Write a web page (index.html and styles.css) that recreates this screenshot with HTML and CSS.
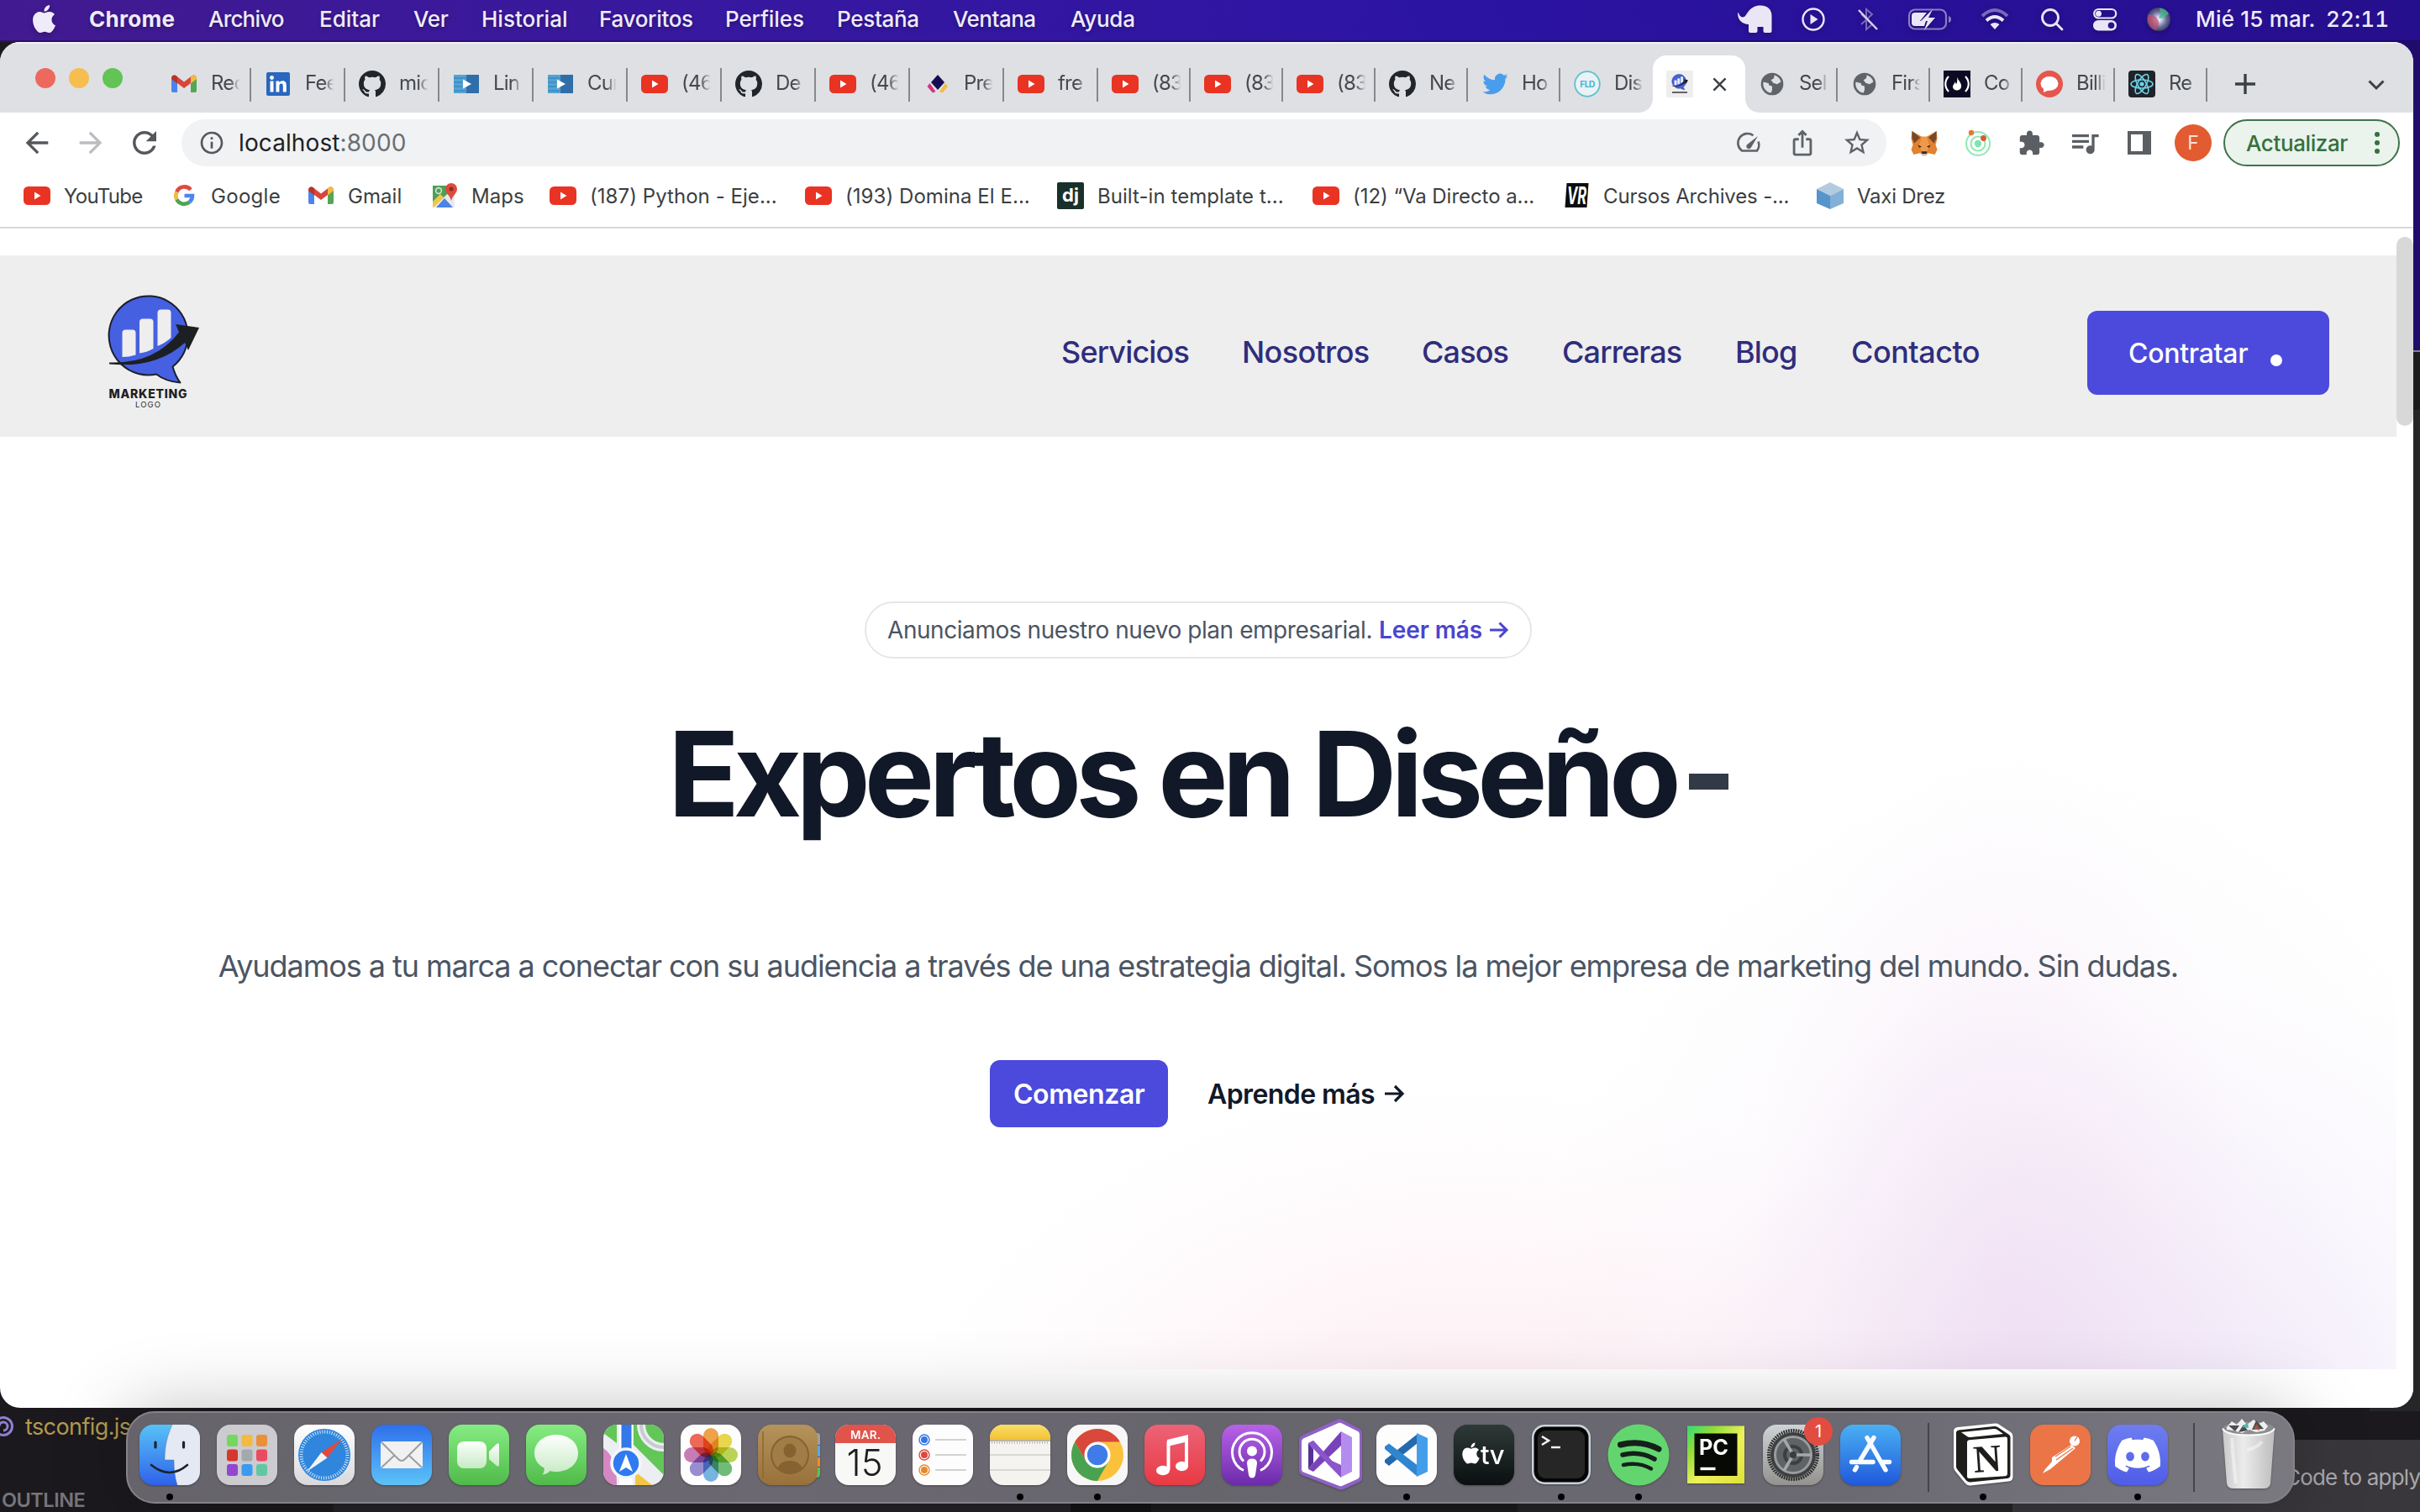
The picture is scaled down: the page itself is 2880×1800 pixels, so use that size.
FILE: index.html
```html
<!DOCTYPE html>
<html lang="es">
<head>
<meta charset="utf-8">
<title>Marketing</title>
<link rel="stylesheet" href="styles.css">
</head>
<body>
<svg class="defs" aria-hidden="true">
  <defs>
    <linearGradient id="gBlue" x2="0" y2="1"><stop stop-color="#2f6fec"/><stop offset="1" stop-color="#5cc3f8"/></linearGradient>
    <linearGradient id="gFinder" x2="0" y2="1"><stop stop-color="#58c2f7"/><stop offset="1" stop-color="#2f62ea"/></linearGradient>
    <linearGradient id="gGreen" x2="0" y2="1"><stop stop-color="#86ec82"/><stop offset="1" stop-color="#4fbb4a"/></linearGradient>
    <linearGradient id="gSilver" x2="0" y2="1"><stop stop-color="#fff"/><stop offset="1" stop-color="#d9d9dc"/></linearGradient>
    <linearGradient id="gSoft" x2="0" y2="1"><stop stop-color="#fdfffd"/><stop offset="1" stop-color="#c7eac4"/></linearGradient>
    <linearGradient id="gStore" x2="0" y2="1"><stop stop-color="#4ab0f3"/><stop offset="1" stop-color="#2059dc"/></linearGradient>
    <linearGradient id="gMusic" x2="0" y2="1"><stop stop-color="#ec6377"/><stop offset="1" stop-color="#e83a43"/></linearGradient>
    <linearGradient id="gPod" x2="0" y2="1"><stop stop-color="#b862e8"/><stop offset="1" stop-color="#6c2bab"/></linearGradient>
    <linearGradient id="gTv" x2="0" y2="1"><stop stop-color="#2e3a38"/><stop offset="1" stop-color="#0a0f10"/></linearGradient>
    <linearGradient id="gGear" x2="0" y2="1"><stop stop-color="#cdd3d6"/><stop offset="1" stop-color="#94928f"/></linearGradient>
    <linearGradient id="gDisc" x2="0" y2="1"><stop stop-color="#6f7df0"/><stop offset="1" stop-color="#4f5de8"/></linearGradient>
    <linearGradient id="gBrown" x2="0" y2="1"><stop stop-color="#b5935a"/><stop offset="1" stop-color="#98703b"/></linearGradient>
    <linearGradient id="gNote" x2="0" y2="1"><stop stop-color="#fade68"/><stop offset="1" stop-color="#f2c135"/></linearGradient>
    <linearGradient id="gPc" x2="1" y2="1"><stop stop-color="#2fdc78"/><stop offset=".25" stop-color="#8fdc3a"/><stop offset=".55" stop-color="#eef05a"/><stop offset="1" stop-color="#dfe23a"/></linearGradient>
    <linearGradient id="gTrash" x2="1" y2="0"><stop stop-color="#c9c9c9"/><stop offset=".4" stop-color="#ececec"/><stop offset="1" stop-color="#bdbdbd"/></linearGradient>
    <radialGradient id="gSiri"><stop stop-color="#fff"/><stop offset=".3" stop-color="#b9c3dc"/><stop offset=".65" stop-color="#6a6f9c"/><stop offset="1" stop-color="#3d3f66"/></radialGradient>
    <clipPath id="app"><rect width="72" height="72" rx="16"/></clipPath>
  </defs>
  <symbol id="yt" viewBox="0 0 32 32"><rect y="5" width="32" height="22" rx="5.500" fill="#e93323"/><path d="M13 11.500v9l7.500-4.500z" fill="#fff"/></symbol>
  <symbol id="gmail" viewBox="0 0 32 32"><path d="M1 9v15a2 2 0 0 0 2 2h5V12z" fill="#4c84ec"/><path d="M31 9v15a2 2 0 0 1-2 2h-5V12z" fill="#54a655"/><path d="M1 9.500C1 6 4.500 4.500 7 6.500l9 7 9-7c2.500-2 6-.5 6 3l-7 5.500-8 6-8-6z" fill="#d8453a"/><path d="M24 7.300l1-.8c2.500-2 6-.5 6 3V10l-7 5.500z" fill="#f3bb42"/><path d="M1 9.500V10l7 5.500V7.300l-1-.8c-2.500-2-6-.5-6 3z" fill="#b93329"/></symbol>
  <symbol id="gh" viewBox="0 0 16 16"><path fill="#22262a" d="M8 0C3.580 0 0 3.580 0 8c0 3.540 2.290 6.530 5.470 7.590.4.070.55-.17.55-.38 0-.19-.01-.82-.01-1.490-2.010.37-2.530-.49-2.690-.94-.09-.23-.48-.94-.82-1.130-.28-.15-.68-.52-.01-.53.63-.01 1.080.58 1.230.82.72 1.210 1.870.87 2.330.66.070-.52.28-.87.51-1.070-1.780-.2-3.640-.89-3.640-3.950 0-.87.31-1.590.82-2.150-.08-.2-.36-1.020.08-2.120 0 0 .67-.21 2.200.82.64-.18 1.320-.27 2-.27s1.360.09 2 .27c1.530-1.040 2.200-.82 2.200-.82.44 1.100.16 1.920.08 2.120.51.56.82 1.270.82 2.150 0 3.070-1.870 3.750-3.650 3.950.29.25.54.73.54 1.480 0 1.070-.01 1.930-.01 2.200 0 .21.15.46.55.38A8.010 8.010 0 0 0 16 8c0-4.420-3.580-8-8-8z"/></symbol>
  <symbol id="li" viewBox="0 0 32 32"><rect x="2" y="2" width="28" height="28" rx="2" fill="#2866c0"/><g fill="#fff"><rect x="6.500" y="12.500" width="4" height="13"/><circle cx="8.500" cy="8.500" r="2.400"/><path d="M13.500 12.500h3.800v1.800c.8-1.300 2.200-2.100 4-2.100 3.700 0 4.500 2.400 4.500 5.800v7.500h-4V19c0-1.700-.1-3.400-2.100-3.400s-2.300 1.600-2.300 3.300v6.600h-3.900z"/></g></symbol>
  <symbol id="play" viewBox="0 0 32 32"><rect x="1" y="5" width="30" height="22" fill="#2f6ea8"/><path d="M1 5h15v22H1z" fill="#55a3d3"/><path d="M1 9h14M1 14h10M1 19h10M1 24h14" stroke="#3d8abf" stroke-width="1.500"/><path d="M12 10.500v11l10-5.500z" fill="#fff"/></symbol>
  <symbol id="pre" viewBox="0 0 32 32"><path d="M17 5l8 9-8 9-8-9z" fill="#160c52"/><path d="M7.500 15l7 10-3.500 1.500-6.500-7.500z" fill="#d4337e"/><path d="M26 15l-7 10 3.500 1.500 6.500-7.500z" fill="#f3bd3c"/></symbol>
  <symbol id="tw" viewBox="0 0 24 24"><path fill="#4a9ded" d="M23.643 4.937c-.835.37-1.732.62-2.675.733a4.670 4.670 0 0 0 2.048-2.578 9.300 9.300 0 0 1-2.958 1.130 4.660 4.660 0 0 0-7.938 4.250 13.229 13.229 0 0 1-9.602-4.868c-.4.69-.63 1.490-.63 2.342A4.660 4.660 0 0 0 3.960 9.824a4.647 4.647 0 0 1-2.110-.583v.06a4.660 4.660 0 0 0 3.737 4.568 4.692 4.692 0 0 1-2.104.08 4.661 4.661 0 0 0 4.352 3.234 9.348 9.348 0 0 1-5.786 1.995 9.500 9.500 0 0 1-1.112-.065 13.175 13.175 0 0 0 7.140 2.093c8.570 0 13.255-7.098 13.255-13.254 0-.2-.005-.402-.014-.602a9.470 9.470 0 0 0 2.323-2.410z"/></symbol>
  <symbol id="fld" viewBox="0 0 32 32"><circle cx="16" cy="16" r="14.800" fill="#e9f2f4" stroke="#5cc0cf" stroke-width="1.800"/><text x="16" y="20" font-size="10.500" font-weight="700" text-anchor="middle" fill="#4db3d2" font-family="Inter, sans-serif">FLD</text></symbol>
  <symbol id="globe" viewBox="0 0 24 24"><circle cx="12" cy="12" r="10" fill="#606469"/><path fill="#dee0e4" d="M11 19.930c-3.950-.49-7-3.850-7-7.930 0-.62.08-1.210.21-1.790L9 11.500v1.500l3 1v3.500zM14 4.200c2.900.8 5.200 3 5.800 6l-3.300 2-3.500-1.200-2-2.500 2.500-1.500z"/></symbol>
  <symbol id="fcc" viewBox="0 0 32 32"><rect width="32" height="32" fill="#0b0a22"/><path d="M6 7c-5 5.500-5 12.500 0 18M26 7c5 5.500 5 12.500 0 18" fill="none" stroke="#fff" stroke-width="2.200"/><path d="M16 7.500c1 4 6 7.500 5 12-.4 2.500-2.500 4-5 4s-5-1.500-5-4.500c0-2 2-3 2.500-5.500 1 1 1.300 2 1.300 3 1.700-2 1.700-5 1.200-9z" fill="#fff"/></symbol>
  <symbol id="bill" viewBox="0 0 32 32"><circle cx="16" cy="16" r="16" fill="#e6564c"/><ellipse cx="16" cy="15.500" rx="10.500" ry="8.500" fill="#fff"/><path d="M9 19v7l7-3z" fill="#fff"/></symbol>
  <symbol id="react" viewBox="0 0 32 32"><rect width="32" height="32" rx="4" fill="#202327"/><g fill="none" stroke="#6fd3ea" stroke-width="1.600"><ellipse cx="16" cy="16" rx="13" ry="5"/><ellipse cx="16" cy="16" rx="13" ry="5" transform="rotate(60 16 16)"/><ellipse cx="16" cy="16" rx="13" ry="5" transform="rotate(120 16 16)"/></g><circle cx="16" cy="16" r="2.600" fill="#6fd3ea"/></symbol>
  <symbol id="logo" viewBox="128 350 112 112"><path d="M205.500 436.500A47 47 0 1 0 186 445.500q12 9 28.500 10-6-8-9-19z" fill="#4660e2" stroke="#1b1f2c" stroke-width="2" stroke-linejoin="round"/><g fill="#eee"><path d="M145.500 425v-28.500q0-4 4-4h8q4 0 4 4v26q-8 2.500-16 2.500z"/><path d="M166 420.500v-37q0-4 4-4h8.500q4 0 4 4V415q-8 4.500-16.500 5.500z"/><path d="M187.500 412v-39.500q0-4 4-4h8q4 0 4 4V402q-7 6.500-16 10z"/></g><path d="M130 431.500q54 2 83-36l-4-9.500 28 4-13 27-4-9q-34 31-90 25.500z" fill="#1d2022"/></symbol>
  <symbol id="apple" viewBox="0 0 24 24"><path d="M12.152 6.896c-.948 0-2.415-1.078-3.960-1.040-2.040.027-3.910 1.183-4.961 3.014-2.117 3.675-.546 9.103 1.519 12.090 1.013 1.454 2.208 3.090 3.792 3.039 1.520-.065 2.090-.987 3.935-.987 1.831 0 2.350.987 3.960.948 1.637-.026 2.676-1.480 3.676-2.948 1.156-1.688 1.636-3.325 1.662-3.415-.039-.013-3.182-1.221-3.220-4.857-.026-3.040 2.480-4.494 2.597-4.559-1.429-2.090-3.623-2.324-4.390-2.376-2-.156-3.675 1.090-4.610 1.090zM15.530 3.830c.843-1.012 1.400-2.427 1.245-3.830-1.207.052-2.662.805-3.532 1.818-.78.896-1.454 2.338-1.273 3.714 1.338.104 2.715-.688 3.559-1.701"/></symbol>
</svg>

<header class="menubar">
  <svg class="apple"><use href="#apple"/></svg>
  <nav class="menus">
    <b class="m1">Chrome</b><span class="m2">Archivo</span><span class="m3">Editar</span><span class="m4">Ver</span><span class="m5">Historial</span><span class="m6">Favoritos</span><span class="m7">Perfiles</span><span class="m8">Pestaña</span><span class="m9">Ventana</span><span>Ayuda</span>
  </nav>
  <div class="status">
    <span class="s1"><svg width="44" height="36" viewBox="0 0 44 36"><path fill="#ebe6f6" d="M3 10c1 5 5 7 8 4 1.500-1.500 1.500-3 3.500-5C18 4 23 1.500 29 1.500c9 0 13.500 5 13.500 12.500v18q0 2-2 2h-6q-2 0-2-2v-5h-7v5q0 2-2 2H17q-2 0-2-2v-8C8 24 2 19 2 11z"/></svg></span>
    <span class="s2"><svg width="32" height="32" viewBox="0 0 32 32"><circle cx="16" cy="16" r="12.500" fill="none" stroke="#ebe6f6" stroke-width="2.400"/><path d="M12.500 10v12l9-6z" fill="#ebe6f6"/></svg></span>
    <span class="s3"><svg width="32" height="32" viewBox="0 0 32 32" fill="none" stroke-width="2"><path d="M9 10l13 12-7 6V4l7 6L9 22" stroke="#7a68bb"/><path d="M6 5l22 23" stroke="#d9d2ee" stroke-width="2.400"/></svg></span>
    <span class="s4"><svg width="56" height="32" viewBox="0 0 56 32"><rect x="3" y="4.500" width="44" height="23" rx="7" fill="none" stroke="#8c7dc5" stroke-width="2.200"/><path d="M50 12v8q3-1 3-4t-3-4z" fill="#8c7dc5"/><path d="M10 8h14l-8 10h7l-2 6H10q-4 0-4-4v-8q0-4 4-4z" fill="#ebe6f6"/><path d="M31 4L17 18h8l-4 11 13-15h-8z" fill="#ebe6f6"/></svg></span>
    <span class="s5"><svg width="36" height="32" viewBox="0 0 36 32" fill="none" stroke-width="4"><path d="M3 12q15-14 30 0" stroke="#7a68bb"/><path d="M8 17.500q10-9 20 0" stroke="#ebe6f6"/><path d="M18 28l-5.500-6q5.500-4 11 0z" fill="#ebe6f6"/></svg></span>
    <span class="s6"><svg width="32" height="32" viewBox="0 0 32 32" fill="none" stroke="#ebe6f6" stroke-width="2.800" stroke-linecap="round"><circle cx="13" cy="14" r="9.500"/><path d="M20 21l7 7"/></svg></span>
    <span class="s7"><svg width="32" height="32" viewBox="0 0 32 32"><rect x="3.200" y="4" width="26" height="10.500" rx="5.200" fill="none" stroke="#ebe6f6" stroke-width="2.200"/><circle cx="8.500" cy="9.300" r="3.500" fill="#ebe6f6"/><rect x="2" y="17" width="28" height="12.500" rx="6.200" fill="#ebe6f6"/><circle cx="23.500" cy="23.200" r="3.800" fill="#281290"/></svg></span>
    <span class="s8"><svg width="30" height="30" viewBox="0 0 30 30"><circle cx="15" cy="15" r="14" fill="url(#gSiri)"/><path d="M3 9A14 14 0 0 0 12 28q5-8 2-13T3 9z" fill="#c94a6e" opacity=".7"/><path d="M16 1.500a14 14 0 0 1 11 7q-6 5-12 6 3-6 1-13z" fill="#45b98c" opacity=".75"/></svg></span>
    <span class="s9">Mié 15 mar.</span>
    <span class="s10">22:11</span>
  </div>
</header>

<div class="desk">
  <div class="desk-right"></div>
  <div class="desk-file"><svg width="36" height="36" viewBox="0 0 36 36"><circle cx="17" cy="18" r="10.500" fill="none" stroke="#8f7fd0" stroke-width="3"/><path d="M12 18a5 5 0 1 1 5 5" fill="none" stroke="#8f7fd0" stroke-width="3"/></svg><span>tsconfig.js</span></div>
  <div class="desk-outline">OUTLINE</div>
  <div class="desk-panels"><i class="p1"></i><i class="p2"></i><i class="p3"></i><i class="p4"></i><i class="p5"></i></div>
  <div class="desk-toast">Code to apply</div>
</div>

<section class="window">
  <div class="tabs">
    <div class="lights"><i class="red"></i><i class="yellow"></i><i class="green"></i></div>
    <div class="tab"><svg><use href="#gmail"/></svg><span>Rec</span></div>
    <div class="tab"><svg><use href="#li"/></svg><span>Fee</span></div>
    <div class="tab"><svg><use href="#gh"/></svg><span>mic</span></div>
    <div class="tab"><svg><use href="#play"/></svg><span>Lin</span></div>
    <div class="tab"><svg><use href="#play"/></svg><span>Cur</span></div>
    <div class="tab"><svg><use href="#yt"/></svg><span>(46</span></div>
    <div class="tab"><svg><use href="#gh"/></svg><span>De</span></div>
    <div class="tab"><svg><use href="#yt"/></svg><span>(46</span></div>
    <div class="tab"><svg><use href="#pre"/></svg><span>Pre</span></div>
    <div class="tab"><svg><use href="#yt"/></svg><span>fre</span></div>
    <div class="tab narrow"><svg><use href="#yt"/></svg><span>(83</span></div>
    <div class="tab narrow"><svg><use href="#yt"/></svg><span>(83</span></div>
    <div class="tab narrow"><svg><use href="#yt"/></svg><span>(83</span></div>
    <div class="tab narrow"><svg><use href="#gh"/></svg><span>Ne</span></div>
    <div class="tab narrow"><svg><use href="#tw"/></svg><span>Ho</span></div>
    <div class="tab narrow bare"><svg><use href="#fld"/></svg><span>Dis</span></div>
    <div class="tab active"><svg viewBox="0 0 32 32"><rect width="32" height="32" fill="#eee"/><use href="#logo" x="6" y="4" width="21" height="20"/><path d="M7 26h18" stroke="#33363c" stroke-width="1.600"/></svg><svg class="close" viewBox="0 0 18 18"><path d="M1.500 1.500l15 15M16.500 1.500l-15 15" stroke="#3c4043" stroke-width="2.600"/></svg></div>
    <div class="tab narrow"><svg><use href="#globe"/></svg><span>Sel</span></div>
    <div class="tab narrow"><svg><use href="#globe"/></svg><span>Firs</span></div>
    <div class="tab narrow"><svg><use href="#fcc"/></svg><span>Co</span></div>
    <div class="tab narrow"><svg><use href="#bill"/></svg><span>Billi</span></div>
    <div class="tab narrow"><svg><use href="#react"/></svg><span>Re</span></div>
    <svg class="plus" viewBox="0 0 24 24"><path d="M12 0v24M0 12h24" stroke="#3c4043" stroke-width="3.400"/></svg>
    <svg class="chev" viewBox="0 0 20 12"><path d="M1.500 1.500L10 10l8.500-8.500" fill="none" stroke="#3c4043" stroke-width="3"/></svg>
  </div>

  <div class="toolbar">
    <svg class="back" viewBox="0 0 24 24"><path fill="#54585d" d="M20 11H7.830l5.590-5.590L12 4l-8 8 8 8 1.410-1.410L7.830 13H20v-2z"/></svg>
    <svg class="fwd" viewBox="0 0 24 24"><path fill="#bbbdc0" d="M4 13h12.170l-5.590 5.590L12 20l8-8-8-8-1.410 1.410L16.170 11H4v2z"/></svg>
    <svg class="reload" viewBox="0 0 24 24"><path fill="#54585d" d="M17.650 6.350C16.200 4.900 14.210 4 12 4c-4.420 0-7.990 3.580-7.990 8s3.570 8 7.990 8c3.730 0 6.840-2.550 7.730-6h-2.080c-.82 2.330-3.040 4-5.650 4-3.310 0-6-2.690-6-6s2.690-6 6-6c1.660 0 3.140.69 4.220 1.780L13 11h7V4l-2.350 2.350z"/></svg>
    <div class="omni">
      <svg class="info" viewBox="0 0 24 24"><path fill="#54585d" d="M11 7h2v2h-2zm0 4h2v6h-2zm1-9C6.480 2 2 6.480 2 12s4.480 10 10 10 10-4.480 10-10S17.520 2 12 2zm0 18c-4.410 0-8-3.590-8-8s3.590-8 8-8 8 3.590 8 8-3.590 8-8 8z"/></svg>
      <span class="url">localhost<em>:8000</em></span>
      <svg class="gauge" viewBox="0 0 28 24"><path d="M18.500 3.200A11.300 11.300 0 0 0 5 21.500h18a11.500 11.500 0 0 0 1.500-11" fill="none" stroke="#5f6368" stroke-width="2.600"/><path d="M24 4L12 13.500a3 3 0 1 0 4 4z" fill="#5f6368"/></svg>
      <svg class="share" viewBox="0 0 24 24"><path fill="#5f6368" d="M16 5l-1.420 1.420-1.590-1.590V16h-1.980V4.830L9.420 6.420 8 5l4-4 4 4zm4 5v11c0 1.100-.9 2-2 2H6c-1.110 0-2-.9-2-2V10c0-1.110.89-2 2-2h3v2H6v11h12V10h-3V8h3c1.100 0 2 .89 2 2z"/></svg>
      <svg class="star" viewBox="0 0 24 24"><path fill="#5f6368" d="M22 9.240l-7.190-.62L12 2 9.190 8.630 2 9.240l5.460 4.730L5.820 21 12 17.270 18.180 21l-1.630-7.030L22 9.240zM12 15.400l-3.760 2.270 1-4.280-3.320-2.880 4.380-.38L12 6.100l1.710 4.040 4.380.38-3.320 2.880 1 4.280L12 15.400z"/></svg>
    </div>
    <svg class="fox" viewBox="0 0 34 32"><path d="M2 1l12 7h6L32 1l1 9-2 8 2 6-3 6-8-2-3 3h-4l-3-3-8 2-3-6 2-6-2-8z" fill="#e2812f"/><path d="M2 1l10 8-7 7-3-6zM32 1L22 9l7 7 3-6z" fill="#75492a"/><path d="M14 8h6l3 10-3 10h-6l-3-10z" fill="#ee9a4a"/><path d="M9 18l5 2-3 1.500zM25 18l-5 2 3 1.500z" fill="#33261e"/><path d="M13.500 26h7l-1.500 5h-4z" fill="#2b2b33"/><path d="M13 29l2 2.500h4l2-2.500z" fill="#c9bcb3"/></svg>
    <svg class="orbit" viewBox="0 0 32 32"><g fill="none" stroke="#8ee8b2" stroke-width="2"><circle cx="16" cy="17" r="14"/><circle cx="16" cy="17" r="8.500"/></g><circle cx="16" cy="17" r="4.200" fill="#7ee6aa"/><circle cx="8" cy="4" r="3.200" fill="#e17a38"/><circle cx="22.500" cy="10.500" r="3.400" fill="#d95736"/></svg>
    <svg class="puzzle" viewBox="0 0 24 24"><path fill="#5b5f64" d="M20.500 11H19V7c0-1.100-.9-2-2-2h-4V3.500C13 2.120 11.880 1 10.500 1S8 2.120 8 3.500V5H4c-1.100 0-1.990.9-1.990 2v3.800H3.500c1.490 0 2.700 1.210 2.700 2.700s-1.210 2.700-2.700 2.700H2V20c0 1.100.9 2 2 2h3.800v-1.500c0-1.490 1.210-2.700 2.700-2.700 1.490 0 2.700 1.210 2.700 2.700V22H17c1.100 0 2-.9 2-2v-4h1.500c1.380 0 2.500-1.120 2.500-2.500S21.880 11 20.500 11z"/></svg>
    <svg class="queue" viewBox="0 0 24 24"><path fill="#5b5f64" d="M15 6H3v2h12V6zm0 4H3v2h12v-2zM3 16h8v-2H3v2zM17 6v8.180c-.31-.11-.65-.18-1-.18-1.660 0-3 1.340-3 3s1.340 3 3 3 3-1.340 3-3V8h3V6h-5z"/></svg>
    <svg class="side" viewBox="0 0 28 28"><path d="M0 0h28v28H0zM4 4v20h14V4z" fill="#5b5f64" fill-rule="evenodd"/></svg>
    <span class="avatar">F</span>
    <button class="update">Actualizar<svg viewBox="0 0 6 26"><circle cx="3" cy="3" r="3"/><circle cx="3" cy="13" r="3"/><circle cx="3" cy="23" r="3"/></svg></button>
  </div>

  <div class="bookmarks">
    <a class="b1"><svg><use href="#yt"/></svg>YouTube</a>
    <a class="b2"><svg viewBox="0 0 32 32"><g fill="none" stroke-width="4.600"><path d="M24 8.800A10 10 0 0 0 7.300 11.500" stroke="#dd4b3e"/><path d="M7.300 11.500a10 10 0 0 0 0 9" stroke="#f0bb40"/><path d="M7.300 20.500A10 10 0 0 0 22.600 23.500" stroke="#51a351"/><path d="M22.600 23.500A10 10 0 0 0 26 16h-9.500" stroke="#4d85ec"/></g></svg>Google</a>
    <a class="b3"><svg><use href="#gmail"/></svg>Gmail</a>
    <a class="b4"><svg viewBox="0 0 32 32"><path d="M2 4h26v26H2z" fill="#4e9f57"/><path d="M2 30L28 6v24z" fill="#e8eaee"/><path d="M2 23l9-9 4 4L3 30H2z" fill="#f2c643"/><path d="M6 30l10-11 10 11z" fill="#4d82e6"/><circle cx="9" cy="10" r="3.400" fill="none" stroke="#cfe6d1" stroke-width="1.600"/><path d="M24 1a7 7 0 0 1 7 7c0 5-5 7-7 14-2-7-7-9-7-14a7 7 0 0 1 7-7z" fill="#dd4b3e"/><circle cx="24" cy="8" r="2.500" fill="#8e2b22"/></svg>Maps</a>
    <a class="b5"><svg><use href="#yt"/></svg>(187) Python - Eje...</a>
    <a class="b6"><svg><use href="#yt"/></svg>(193) Domina El E...</a>
    <a class="b7"><svg viewBox="0 0 32 32"><rect width="32" height="32" rx="2" fill="#18312a"/><text x="16" y="23" text-anchor="middle" font-size="22" font-weight="700" fill="#fff" font-family="Inter, sans-serif">dj</text></svg>Built-in template t...</a>
    <a class="b8"><svg><use href="#yt"/></svg>(12) “Va Directo a...</a>
    <a class="b9"><svg viewBox="0 0 32 32"><path d="M4.500 1h26l-2 29h-26z" fill="#0c0c0c"/><text x="16.500" y="26" text-anchor="middle" font-size="28" font-weight="700" font-style="italic" fill="#fff" font-family="Inter, sans-serif" textLength="23" lengthAdjust="spacingAndGlyphs">VR</text></svg>Cursos Archives -...</a>
    <a class="b10"><svg viewBox="0 0 32 32"><path d="M16 0l16 8-16 8L0 8z" fill="#b4cbdf"/><path d="M0 8l16 8v16L0 25z" fill="#5694cc"/><path d="M32 8l-16 8v16l16-7z" fill="#82b0d8"/></svg>Vaxi Drez</a>
  </div>

  <div class="page">
    <div class="content">
      <div class="nav">
        <svg class="brand" width="120" height="140" viewBox="128 350 120 140"><use href="#logo" x="128" y="350" width="112" height="112"/><text x="129.500" y="474" font-size="14" font-weight="800" fill="#1d2022" textLength="93" font-family="Inter, sans-serif">MARKETING</text><text x="161" y="485" font-size="9.500" fill="#2c3033" textLength="30" font-family="Inter, sans-serif">LOGO</text></svg>
        <div class="links"><a class="n1">Servicios</a><a class="n2">Nosotros</a><a class="n3">Casos</a><a class="n4">Carreras</a><a class="n5">Blog</a><a class="n6">Contacto</a></div>
        <button class="hire">Contratar<i></i></button>
      </div>
      <main class="hero">
        <div class="pill"><span>Anunciamos nuestro nuevo plan empresarial.</span><a>Leer más</a><svg width="24" height="22" viewBox="0 0 24 22"><path d="M1 11h20M12.500 2.500L21 11l-8.500 8.500" fill="none" stroke="#4a45cf" stroke-width="3"/></svg></div>
        <h1>Expertos en Diseño<i></i></h1>
        <p>Ayudamos a tu marca a conectar con su audiencia a través de una estrategia digital. Somos la mejor empresa de marketing del mundo. Sin dudas.</p>
        <div class="actions"><button>Comenzar</button><a>Aprende más</a><svg width="25" height="24" viewBox="0 0 25 24"><path d="M1 12h21M13 3l9 9-9 9" fill="none" stroke="#111827" stroke-width="3.200"/></svg></div>
      </main>
    </div>
    <div class="scroll"><i></i></div>
  </div>
</section>

<footer class="dock">
  <span class="app on"><svg viewBox="0 0 72 72"><g clip-path="url(#app)"><rect width="72" height="72" fill="url(#gFinder)"/><path d="M39 0c-6 13-9 26-9 42h11c0 11 1 21 4 30h27V0z" fill="#e4e9f3"/></g><path d="M14 48q22 18 43 0" fill="none" stroke="#1b2430" stroke-width="2.600" stroke-linecap="round"/><path d="M19 21v6M52.500 21v6" stroke="#1b2430" stroke-width="3.200" stroke-linecap="round"/><path d="M39 0c-6 13-9 26-9 42h11c0 11 1 21 4 30" fill="none" stroke="#40618f" stroke-opacity=".35"/></svg></span>
  <span class="app"><svg viewBox="0 0 72 72"><rect width="72" height="72" rx="16" fill="#cccbd0"/><g><rect x="12" y="12" width="13" height="14" rx="3" fill="#74d75f"/><rect x="29.500" y="12" width="13" height="14" rx="3" fill="#f3b940"/><rect x="47" y="12" width="13" height="14" rx="3" fill="#ea9038"/><rect x="12" y="29.500" width="13" height="14" rx="3" fill="#d5382e"/><rect x="29.500" y="29.500" width="13" height="14" rx="3" fill="#a3a9ad"/><rect x="47" y="29.500" width="13" height="14" rx="3" fill="#ea4b5e"/><rect x="12" y="47" width="13" height="14" rx="3" fill="#9346cf"/><rect x="29.500" y="47" width="13" height="14" rx="3" fill="#3a9af0"/><rect x="47" y="47" width="13" height="14" rx="3" fill="#62c7a1"/></g></svg></span>
  <span class="app"><svg viewBox="0 0 72 72"><rect width="72" height="72" rx="16" fill="url(#gSilver)"/><circle cx="36" cy="36" r="31" fill="#2f86dc"/><circle cx="36" cy="36" r="27.500" fill="none" stroke="#d9ebfa" stroke-width="4" stroke-dasharray="1 1.880"/><path d="M57 17L39.500 39.500l-7-6.500z" fill="#e2483c"/><path d="M15 56l17.500-23 7 6.500z" fill="#f4f4f4"/></svg></span>
  <span class="app"><svg viewBox="0 0 72 72"><rect width="72" height="72" rx="16" fill="url(#gBlue)"/><rect x="11" y="20" width="50" height="32" rx="3" fill="#f1f1f2"/><path d="M12 21l20 20q4 4 8 0l20-20M12 51l16-15M60 51L44 36" fill="none" stroke="#9b9ea3" stroke-width="2"/></svg></span>
  <span class="app"><svg viewBox="0 0 72 72"><rect width="72" height="72" rx="16" fill="url(#gGreen)"/><rect x="10" y="20" width="35" height="32" rx="8" fill="url(#gSoft)"/><path d="M48 32l9-9q3-2 3 2v22q0 4-3 2l-9-8z" fill="url(#gSoft)"/></svg></span>
  <span class="app"><svg viewBox="0 0 72 72"><rect width="72" height="72" rx="16" fill="url(#gGreen)"/><path d="M36 12c15 0 26 9.500 26 22S51 56 36 56c-3 0-5-.3-7.500-1-2 2.500-5 4-9 4.500 2-2.500 2.500-5 2-8C14 47.500 10 41.500 10 34c0-12.500 11-22 26-22z" fill="url(#gSoft)"/></svg></span>
  <span class="app"><svg viewBox="0 0 72 72"><g clip-path="url(#app)"><rect width="72" height="72" fill="#eceef2"/><path d="M36 0h36v60L36 24z" fill="#62c756"/><path d="M0 10L10 0h6v22L0 10z" fill="#62c756"/><path d="M0 28q16 10 16 44H0z" fill="#d587c3"/><path d="M45 0a27 27 0 0 0 27 27" fill="none" stroke="#eceef2" stroke-width="10"/><path d="M45 0a27 27 0 0 0 27 27" fill="none" stroke="#c7cad0" stroke-width="4"/><path d="M19 0h16v72H19z" fill="#fff"/><path d="M21.500 0h12v40h-12z" fill="#3478ea"/><path d="M38 72V56l20 16z" fill="#f2c643"/></g><circle cx="27" cy="46" r="17" fill="#2f7af0" stroke="#f4f6fa" stroke-width="3.600"/><path d="M27 35l8 21-8-5-8 5z" fill="#fff"/></svg></span>
  <span class="app"><svg viewBox="0 0 72 72"><rect width="72" height="72" rx="16" fill="#fdfdfd"/><g class="petals"><rect x="27" y="4" width="18" height="32" rx="9" fill="#f09838"/><rect x="27" y="4" width="18" height="32" rx="9" fill="#e9d43a" transform="rotate(45 36 36)"/><rect x="27" y="4" width="18" height="32" rx="9" fill="#b5d144" transform="rotate(90 36 36)"/><rect x="27" y="4" width="18" height="32" rx="9" fill="#62b66a" transform="rotate(135 36 36)"/><rect x="27" y="4" width="18" height="32" rx="9" fill="#6badde" transform="rotate(180 36 36)"/><rect x="27" y="4" width="18" height="32" rx="9" fill="#8f82cf" transform="rotate(225 36 36)"/><rect x="27" y="4" width="18" height="32" rx="9" fill="#c56fb0" transform="rotate(270 36 36)"/><rect x="27" y="4" width="18" height="32" rx="9" fill="#ec5a47" transform="rotate(315 36 36)"/></g></svg></span>
  <span class="app"><svg viewBox="0 0 72 72"><path d="M66 10h5q3 0 3 4v10h-8z" fill="#9ca1a4"/><path d="M66 25h8v13h-8z" fill="#58a9e4"/><path d="M66 39h8v11h-8z" fill="#ec8b2f"/><path d="M66 51h8v7q0 5-4 5h-4z" fill="#5fc158"/><rect width="71" height="72" rx="16" fill="url(#gBrown)"/><path d="M6 8v56" stroke="#8d6832" stroke-width="1.500"/><circle cx="38" cy="36" r="22" fill="#a07c47" stroke="#856230" stroke-width="2"/><ellipse cx="38" cy="31" rx="7.500" ry="8.500" fill="#856230"/><path d="M23 52q4-9 15-9t15 9q-6 6-15 6t-15-6z" fill="#856230"/></svg></span>
  <span class="app"><svg viewBox="0 0 72 72"><rect width="72" height="72" rx="16" fill="#f8f8f7"/><path d="M0 22v-6A16 16 0 0 1 16 0h40a16 16 0 0 1 16 16v6z" fill="#e0544b"/><text x="36" y="16.500" text-anchor="middle" font-size="13.500" font-weight="600" fill="#fff" font-family="Inter, sans-serif" textLength="36">MAR.</text><text x="35" y="61" text-anchor="middle" font-size="44" font-weight="300" fill="#1d1d1f" font-family="Inter, sans-serif" textLength="43" lengthAdjust="spacingAndGlyphs">15</text></svg></span>
  <span class="app"><svg viewBox="0 0 72 72"><rect width="72" height="72" rx="16" fill="#fdfdfd"/><path d="M27 18h37M27 36h37M27 54h37" stroke="#c3c3c5" stroke-width="1.400"/><g stroke-width="1.400" fill="none"><circle cx="14" cy="18" r="6" stroke="#3478e6"/><circle cx="14" cy="36" r="6" stroke="#dc4a3d"/><circle cx="14" cy="54" r="6" stroke="#e68a2e"/></g><circle cx="14" cy="18" r="4" fill="#3478e6"/><circle cx="14" cy="36" r="4" fill="#dc4a3d"/><circle cx="14" cy="54" r="4" fill="#e68a2e"/></svg></span>
  <span class="app on"><svg viewBox="0 0 72 72"><rect width="72" height="72" rx="16" fill="#f4f3f0"/><path d="M0 18v-2A16 16 0 0 1 16 0h40a16 16 0 0 1 16 16v2z" fill="url(#gNote)"/><path d="M0 19h72" stroke="#a99f86" stroke-width="1.400"/><path d="M2 21.500h68" stroke="#aaa79f" stroke-width="2" stroke-dasharray="1 2"/><path d="M0 36h72M0 54h72" stroke="#d0cfcb" stroke-width="1.300"/></svg></span>
  <span class="app on"><svg viewBox="0 0 72 72"><rect width="72" height="72" rx="16" fill="#f7f7f7"/><circle cx="36" cy="36" r="31" fill="#fbc13c"/><path d="M9.200 20.500A31 31 0 0 1 62.800 20.500H36L22.600 43.700z" fill="#d9483b"/><path d="M9.200 20.500A31 31 0 0 0 36 67l13.400-23.200H22.600z" fill="#4aa251"/><circle cx="36" cy="36" r="15.500" fill="#fff"/><circle cx="36" cy="36" r="12.200" fill="#3f7ce8"/></svg></span>
  <span class="app"><svg viewBox="0 0 72 72"><rect width="72" height="72" rx="16" fill="url(#gMusic)"/><path d="M28.500 54V21.500L50 16v33" fill="none" stroke="#fff" stroke-width="4"/><path d="M27 18l25-6v8l-25 6z" fill="#fff"/><ellipse cx="22" cy="54.500" rx="8" ry="5.800" fill="#fff"/><ellipse cx="44.500" cy="49.500" rx="7.500" ry="5.800" fill="#fff"/></svg></span>
  <span class="app"><svg viewBox="0 0 72 72"><rect width="72" height="72" rx="16" fill="url(#gPod)"/><g fill="none" stroke="#fff" stroke-width="3"><path d="M26 54.500A23.500 23.500 0 1 1 46 54.500"/><path d="M26 43.500A15 15 0 1 1 46 43.500"/></g><circle cx="36" cy="31.500" r="6" fill="#fff"/><path d="M30 46q0-5.500 6-5.500t6 5.500l-2 14q-1 3.500-4 3.500t-4-3.500z" fill="#fff"/></svg></span>
  <span class="app"><svg viewBox="0 0 72 72"><path d="M50-6.500L72 5q3 2 3 5v53q0 3-2.500 5L53 77q-3 1.500-6 0L3 60Q0 58 0 55V18q0-3 3-5L46-6.500q2-1 4 0z" fill="#8e62c4"/><path d="M50-2l20 10q2 1 2 3.500V61q0 2-2 3.500L51 73q-1.500.7-3 0L5 56.500q-2-1-2-3V20q0-2 2-3.500L47-2q1.500-.7 3 0z" fill="#fff"/><path d="M11 22l6-3 22 24 11 5v15L35 48z" fill="#8b55cc"/><path d="M11 22v31l6-7V29z" fill="#57319a"/><path d="M11 53l6 3 33-31V8L35 25z" fill="#7a42ba"/><path d="M17 19l33 36v8L11 22z" fill="#8b55cc"/><path d="M50 8l13 7v41l-13 6.500z" fill="#b48cf0"/></svg></span>
  <span class="app on"><svg viewBox="0 0 72 72"><rect width="72" height="72" rx="16" fill="#fdfdfd"/><path d="M10 45l5 4 34-27V11L10 42z" fill="#2569ad"/><path d="M10 26l5-3.500 34 26V62L10 29z" fill="#2f86cf"/><path d="M48 10l13 6v40l-13 6z" fill="#449de8"/></svg></span>
  <span class="app"><svg viewBox="0 0 72 72"><rect width="72" height="72" rx="16" fill="url(#gTv)"/><use href="#apple" x="8" y="21" width="25" height="26" fill="#fff"/><text x="32" y="47" font-size="31" font-weight="500" fill="#fff" font-family="Inter, sans-serif" letter-spacing="-.5">tv</text></svg></span>
  <span class="app on"><svg viewBox="0 0 72 72"><rect x="1" width="70" height="71" rx="15" fill="#c9d3da"/><rect x="3.500" y="2.500" width="65" height="66" rx="13" fill="#050505"/><rect x="8" y="7" width="56" height="57" rx="9" fill="#262626"/><path d="M13 14l8 5-8 5M24 27h11" fill="none" stroke="#f4f4f4" stroke-width="2.600"/></svg></span>
  <span class="app on"><svg viewBox="0 0 72 72"><circle cx="36" cy="36" r="36.500" fill="#63d56f"/><g fill="none" stroke="#14201a" stroke-linecap="round"><path d="M14.500 24q24-6.500 45.500 5" stroke-width="7"/><path d="M17 36q20-5 38 5" stroke-width="5.500"/><path d="M18 48q18-4 33 4.500" stroke-width="4.500"/></g></svg></span>
  <span class="app"><svg viewBox="0 0 72 72"><rect x="2" y="1.500" width="68" height="68.500" fill="url(#gPc)"/><rect x="10.500" y="10.500" width="51" height="50.500" fill="#070a04"/><text x="16" y="36" font-size="25" font-weight="700" fill="#fff" font-family="Inter, sans-serif" textLength="35" lengthAdjust="spacingAndGlyphs">PC</text><path d="M17.500 52.500h18" stroke="#fff" stroke-width="3.400"/></svg></span>
  <span class="app"><svg viewBox="0 0 72 72"><rect width="72" height="72" rx="16" fill="url(#gGear)"/><circle cx="36" cy="36" r="29" fill="none" stroke="#2c2d2e" stroke-width="4" stroke-dasharray="1.800 1.100"/><circle cx="36" cy="36" r="27" fill="#3d3f41"/><circle cx="36" cy="36" r="21.500" fill="#5f6365" stroke="#9a9da0" stroke-width="3"/><circle cx="36" cy="36" r="10" fill="none" stroke="#3c3f41" stroke-width="4"/><path d="M36 36h22M36 36L25 17M36 36L25 55" stroke="#a5a8aa" stroke-width="3.600"/><circle cx="36" cy="36" r="4" fill="#3a3c3e"/></svg><b class="badge">1</b></span>
  <span class="app"><svg viewBox="0 0 72 72"><rect width="72" height="72" rx="16" fill="url(#gStore)"/><g fill="none" stroke="#f7fbff" stroke-width="5.400" stroke-linecap="round"><path d="M40 15.500L24 42M32 15.500L54 54M13.500 44.500H39M50 44.500h8.500M19.500 50.500L17.500 54"/></g></svg></span>
  <i class="rule r1"></i>
  <span class="app on"><svg viewBox="0 0 72 72"><path d="M6 3L50-1.500q3-.3 5 1.200L69 9q2.500 1.500 2.500 5v48q0 5-5 5.500L21 72.500q-4 .3-6.500-3L3 55.500Q1 53 1 50V8q0-4.500 5-5z" fill="#fff"/><path d="M7 6.500l42-4.500q2.500-.2 4.500 1L67 12q1.500 1 1.500 3v45q0 3.500-3.500 4L21 68.500q-3 .2-5-2L5.500 53.500Q4 52 4 49.500V10q0-3 3-3.500z" fill="#1f1d1c"/><path d="M10 9l39-4q2-.2 3.500.8L60 11l-39 4q-2.500.2-4-1zM17 21q0-2.500 2.500-2.700l43-3.700q2.500-.2 2.500 2.300v41q0 3-2.700 3.300L20 64q-3 .2-3-2.500z" fill="#fff"/><text x="41" y="56" text-anchor="middle" font-size="46" font-weight="700" fill="#1f1d1c" font-family="Liberation Serif, serif" transform="rotate(-4 41 40)">N</text></svg></span>
  <span class="app"><svg viewBox="0 0 72 72"><rect width="72" height="72" rx="16" fill="#ec7548"/><circle cx="53" cy="19.500" r="6" fill="#fff"/><path d="M49 24l5 4-18 15-12 10-9 5 3-5 8-9v-5z" fill="#fff"/><path d="M30 38l18-12M31 42l20-14M53 19.500l3-5" stroke="#ec7548" stroke-width="1.300"/></svg></span>
  <span class="app on"><svg viewBox="0 0 72 72"><rect width="72" height="72" rx="16" fill="url(#gDisc)"/><svg x="9" y="9" width="54" height="54" viewBox="0 0 24 24"><path fill="#fff" d="M20.317 4.370a19.790 19.790 0 00-4.885-1.515.074.074 0 00-.079.037c-.211.375-.445.865-.608 1.249-1.845-.276-3.680-.276-5.487 0-.164-.393-.406-.874-.618-1.249a.077.077 0 00-.079-.037 19.736 19.736 0 00-4.885 1.515.07.07 0 00-.032.028C.533 9.046-.319 13.580.099 18.058a.082.082 0 00.031.056c2.053 1.508 4.041 2.423 5.993 3.029a.078.078 0 00.084-.028c.462-.63.873-1.295 1.226-1.994a.076.076 0 00-.042-.106c-.653-.248-1.274-.55-1.872-.892a.077.077 0 01-.008-.128c.126-.094.252-.192.372-.291a.074.074 0 01.078-.011c3.928 1.793 8.180 1.793 12.061 0a.074.074 0 01.079.010c.12.099.246.198.373.292a.077.077 0 01-.007.128 12.299 12.299 0 01-1.873.891.077.077 0 00-.041.107c.36.698.772 1.363 1.225 1.993a.076.076 0 00.084.029c1.961-.607 3.950-1.522 6.002-3.029a.077.077 0 00.031-.055c.5-5.177-.838-9.674-3.549-13.660a.061.061 0 00-.031-.029zM8.020 15.331c-1.183 0-2.157-1.086-2.157-2.419 0-1.333.956-2.419 2.157-2.419 1.211 0 2.176 1.095 2.157 2.419 0 1.333-.956 2.419-2.157 2.419zm7.975 0c-1.183 0-2.157-1.086-2.157-2.419 0-1.333.955-2.419 2.157-2.419 1.211 0 2.176 1.095 2.157 2.419 0 1.333-.946 2.419-2.157 2.419z"/></svg></svg></span>
  <i class="rule r2"></i>
  <span class="app"><svg viewBox="0 0 72 72"><path d="M5 4h62l-5 66q-1 6-8 6H18q-7 0-8-6z" fill="url(#gTrash)"/><ellipse cx="36" cy="4.500" rx="31" ry="8" fill="#8c8d90"/><path d="M10 3L16-4l6 4 6-7 6 7 8-6 6 5 6-3 5 6-4 5-10 2-8-3-9 4-10-3-8-1z" fill="#efefef"/><path d="M12 1l8 7 5-7zM40 6l5-11 9 10zM24 9l6-9 5 7z" fill="#4b4c52"/><path d="M28 3l7-6 1 7z" fill="#4bb9a6"/><path d="M42 4l4-5 3 8z" fill="#a85444"/><path d="M5 4.500q4 8 31 8t31-8" fill="none" stroke="#fafafa" stroke-width="2"/><path d="M16 16q2 30 5 54M34 30q12-2 18-10" fill="none" stroke="#fff" stroke-opacity=".45" stroke-width="4"/></svg></span>
</footer>
</body>
</html>
```
FILE: styles.css
```css
* { box-sizing: border-box; }
body {
  margin: 0;
  width: 2880px;
  height: 1800px;
  position: relative;
  overflow: hidden;
  background: #1d1b1f;
  font-family: Inter, "Liberation Sans", sans-serif;
}
svg { display: block; flex: none; overflow: visible; }
button { font-family: inherit; border: 0; }
.defs { position: absolute; width: 0; height: 0; }

/* menu bar */
.menubar {
  height: 50px;
  padding-bottom: 5px;
  display: flex;
  align-items: center;
  color: #efebf8;
  font-size: 26px;
  font-weight: 500;
  background: linear-gradient(90deg, #421a90, #3718a0 30%, #2c14a3 60%, #281198 80%, #260f8c);
  box-shadow: inset 0 -2px 0 rgba(20, 5, 60, .45);
}
.menubar svg { filter: drop-shadow(0 2px 3px rgba(0, 0, 0, .25)); }
.apple { width: 33px; height: 33px; margin-left: 36px; fill: #efebf8; }
.menus { display: flex; margin-left: 37px; letter-spacing: -.3px; text-shadow: 0 2px 4px rgba(0, 0, 0, .3); }
.menus b { font-weight: 700; letter-spacing: .3px; }
.m1 { width: 142px; }
.m2 { width: 132px; letter-spacing: -.8px; }
.m3 { width: 112px; letter-spacing: 0; }
.m4 { width: 81px; }
.m5 { width: 140px; letter-spacing: 0; }
.m6 { width: 150px; }
.m7 { width: 133px; letter-spacing: -.1px; }
.m8 { width: 138px; }
.m9 { width: 140px; letter-spacing: -.5px; }
.status { display: flex; align-items: center; margin-left: auto; }
.s1 { width: 76px; }
.s2 { width: 64px; }
.s3 { width: 63px; }
.s4 { width: 87px; }
.s5 { width: 71px; }
.s6 { width: 62px; }
.s7 { width: 65px; }
.s8 { width: 59px; }
.s9 { width: 155px; letter-spacing: .2px; white-space: nowrap; }
.s10 { width: 112px; font-feature-settings: "tnum"; letter-spacing: .2px; }

/* editor showing behind the browser */
.desk { position: absolute; inset: 50px 0 0 0; background: #1b191d; }
.desk-right {
  position: absolute; right: 0; top: 0; width: 60px; height: 1630px;
  background: linear-gradient(#210c6c 0 367px, #858287 367px 369px, #1b1c1c 369px 438px, #252628 438px);
}
.desk-file {
  position: absolute; left: -13px; top: 1623px; width: 300px; height: 50px;
  display: flex; align-items: center; gap: 7px;
  color: #b39a50; font-size: 27px; letter-spacing: -.6px;
}
.desk-outline { position: absolute; left: 2px; top: 1721px; color: #77757b; font-size: 23.5px; line-height: 30px; font-weight: 600; letter-spacing: -.5px; }
.desk-panels { position: absolute; left: 0; bottom: 0; width: 2880px; height: 90px; display: flex; align-items: flex-end; }
.desk-panels i { height: 40px; }
.p1 { width: 397px; }
.p2 { width: 877px; background: #242227; }
.p3 { width: 96px; background: #131215; }
.p4 { width: 436px; background: #1b1a1d; }
.p5 { width: 589px; background: #242327; }
.desk-toast {
  position: absolute; left: 2395px; top: 1664px; width: 485px; height: 86px;
  padding: 20px 0 0 324px; white-space: nowrap;
  background: #39373b; color: #a9a7ac; font-size: 26px; line-height: 50px; letter-spacing: -.8px;
}

/* browser window */
.window {
  position: absolute; left: 0; top: 50px; width: 2872px; height: 1626px;
  border-radius: 24px; overflow: hidden; background: #fff;
  display: flex; flex-direction: column;
}
.tabs { height: 84px; flex: none; background: #dee0e4; border-top: 2px solid #f2f2f6; display: flex; padding-top: 14px; }
.lights { width: 187px; padding-left: 42px; display: flex; gap: 16px; align-items: center; }
.lights i { width: 24px; height: 24px; border-radius: 50%; margin-top: -14px; }
.lights .red { background: #ed695e; }
.lights .yellow { background: #f5be4f; }
.lights .green { background: #61c454; }
.tab {
  width: 112px; height: 68px; flex: none; padding: 0 12px 0 16px;
  display: flex; align-items: center; gap: 16px;
  color: #45484c; font-size: 24px; letter-spacing: -.8px;
  background: linear-gradient(#85888c, #85888c) right 15px / 2px 40px no-repeat;
}
.narrow { width: 110px; }
.tab svg { width: 32px; height: 32px; }
.tab span {
  width: 36px; overflow: hidden; white-space: nowrap; line-height: 34px; margin-top: -2px; flex: none;
  -webkit-mask-image: linear-gradient(90deg, #000 62%, transparent 96%);
  mask-image: linear-gradient(90deg, #000 62%, transparent 96%);
}
.bare { background: none; }
.active {
  width: 110px; background: #fff; border-radius: 16px 16px 0 0; gap: 23px; position: relative;
}
.active::before, .active::after { content: ""; position: absolute; bottom: 0; width: 16px; height: 16px; }
.active::before { left: -16px; background: radial-gradient(circle at 0 0, transparent 15.5px, #fff 16px); }
.active::after { right: -16px; background: radial-gradient(circle at 100% 0, transparent 15.5px, #fff 16px); }
.tab .close { width: 17px; height: 17px; }
.plus { width: 24px; height: 24px; margin: 22px 0 0 33px; }
.chev { width: 20px; height: 12px; margin: 29px 34px 0 auto; }

.toolbar { height: 74px; flex: none; display: flex; align-items: center; padding-left: 24px; margin-top: -1px; }
.back { width: 40px; height: 40px; }
.fwd { width: 40px; height: 40px; margin-left: 24px; }
.reload { width: 42px; height: 42px; margin-left: 23px; }
.omni {
  width: 2029px; height: 56px; margin-left: 23px; border-radius: 28px; background: #f0f2f4;
  display: flex; align-items: center; padding: 0 17px 0 20px;
}
.info { width: 32px; height: 32px; }
.url { margin: 0 auto 0 16px; font-size: 28px; letter-spacing: .1px; color: #202124; }
.url em { font-style: normal; color: #6a6e73; }
.gauge { width: 28px; height: 24px; }
.share { width: 34px; height: 34px; margin-left: 32px; }
.star { width: 36px; height: 36px; margin-left: 30px; }
.fox { width: 34px; height: 31px; margin-left: 28px; }
.orbit { width: 32px; height: 32px; margin-left: 31px; }
.puzzle { width: 33px; height: 33px; margin-left: 31px; }
.queue { width: 40px; height: 40px; margin-left: 27px; }
.side { width: 28px; height: 28px; margin-left: 31px; }
.avatar {
  width: 44px; height: 44px; margin-left: 28px; border-radius: 50%; background: #e35b30; color: #fbe3da;
  font-size: 23px; display: flex; align-items: center; justify-content: center; flex: none;
}
.update {
  width: 210px; height: 56px; margin-left: 14px; flex: none; padding: 0 22px 0 25px; border-radius: 28px;
  border: 2px solid #41714a; background: #eaf3ec; color: #34713f;
  font-size: 26px; font-weight: 500; letter-spacing: -.4px;
  display: flex; align-items: center; justify-content: space-between;
}
.update svg { width: 6px; height: 26px; fill: #34713f; }

.bookmarks {
  height: 65px; flex: none; padding: 0 0 11px 28px; border-bottom: 2px solid #d9d9db;
  display: flex; align-items: center; color: #3b3e42; font-size: 24px; letter-spacing: .05px;
}
.bookmarks a { display: flex; align-items: center; gap: 16px; flex: none; white-space: nowrap; }
.bookmarks svg { width: 32px; height: 32px; }
.b1 { width: 175px; letter-spacing: -.7px; }
.b2 { width: 163px; letter-spacing: .3px; }
.b3 { width: 147px; }
.b4 { width: 141px; }
.b5 { width: 304px; }
.b6 { width: 300px; }
.b7 { width: 304px; }
.b8 { width: 298px; letter-spacing: -.05px; }
.b9 { width: 302px; letter-spacing: -.15px; }
.b10 { width: 200px; letter-spacing: -.25px; }

/* site */
.page { flex: 1; display: flex; }
.content {
  width: 2852px; height: 1358px; padding-top: 32px;
  background:
    radial-gradient(ellipse 300px 640px at 2380px 1260px, rgba(222, 176, 226, .17), rgba(222, 176, 226, .10) 40%, rgba(222, 176, 226, .03) 75%, transparent),
    radial-gradient(ellipse 640px 900px at 2420px 1520px, rgba(205, 160, 218, .28), rgba(205, 160, 218, .16) 35%, rgba(205, 160, 218, .04) 70%, transparent),
    radial-gradient(ellipse 460px 520px at 2720px 1420px, rgba(196, 180, 245, .14), rgba(196, 180, 245, .06) 50%, transparent),
    radial-gradient(ellipse 680px 480px at 1740px 1490px, rgba(244, 150, 180, .26), rgba(244, 150, 180, .12) 35%, rgba(244, 150, 180, .03) 75%, transparent),
    #fff;
}
.nav { height: 216px; padding: 16px 80px 0 128px; background: #eee; display: flex; align-items: center; }
.links { margin: -2px 0 0 auto; display: flex; font-size: 36px; line-height: 48px; font-weight: 500; color: #2f2d7c; letter-spacing: -.85px; }
.n1 { width: 215px; }
.n2 { width: 214px; letter-spacing: -.65px; }
.n3 { width: 167px; }
.n4 { width: 206px; }
.n5 { width: 138px; }
.n6 { width: 281px; letter-spacing: -.5px; }
.hire {
  width: 288px; height: 100px; border-radius: 12px; background: #4b4adc; color: #fff; padding: 0 0 0 49px;
  font-size: 32px; font-weight: 500; letter-spacing: -.3px; display: flex; align-items: center;
}
.hire i { width: 14px; height: 14px; border-radius: 50%; background: #fff; margin: 18px 0 0 27px; }
.hero { display: flex; flex-direction: column; align-items: center; padding-top: 196px; }
.pill {
  width: 794px; height: 68px; border: 2px solid #e6e6e8; border-radius: 34px; padding-left: 25px;
  display: flex; align-items: center; font-size: 28px; color: #4b5563; letter-spacing: -.44px; white-space: nowrap;
}
.pill a { margin-left: 8px; font-weight: 600; color: #4a45cf; letter-spacing: -.1px; }
.pill svg { margin-left: 8px; }
h1 {
  margin: 57px 0 0; display: flex; align-items: center; font-size: 140px; line-height: 160px; font-weight: 700;
  letter-spacing: -6.85px; color: #111827; white-space: nowrap;
}
h1 i { width: 47px; height: 19px; margin: 18px 0 0 16px; background: #323a48; }
p { margin: 121px 0 0; font-size: 36px; line-height: 56px; letter-spacing: -1.06px; color: #4b5563; white-space: nowrap; }
.actions { margin-top: 84px; height: 80px; padding-right: 2px; display: flex; align-items: center; font-size: 32px; font-weight: 600; color: #111827; }
.actions button { width: 212px; height: 80px; border-radius: 12px; background: #4b4adc; color: #fff; font-size: 32px; font-weight: 600; letter-spacing: -.4px; }
.actions a { margin-left: 47px; letter-spacing: -.6px; }
.actions svg { margin-left: 11px; }
.scroll { width: 20px; padding-top: 10px; background: #fff; }
.scroll i { display: block; height: 225px; border-radius: 10px; background: #d8d8d8; }

/* dock */
.dock {
  position: absolute; left: 150px; top: 1680px; width: 2581px; height: 110px; border-radius: 34px;
  padding: 14px 0 0 14px; display: flex; align-items: flex-start; gap: 20px;
  background: linear-gradient(90deg, #66646a, #6b6872 30%, #67656c 50%, #6b6972 80%, #7b7980);
  border: 2px solid #85838a; box-shadow: 0 0 90px rgba(0, 0, 0, .26);
}
.app { position: relative; width: 72px; height: 90px; flex: none; }
.app svg { width: 72px; height: 72px; filter: drop-shadow(0 1px 1px rgba(0, 0, 0, .3)); }
.app svg svg { width: 54px; height: 54px; filter: none; }
.app.on::after { content: ""; position: absolute; left: 32px; top: 82px; width: 8px; height: 8px; border-radius: 50%; background: #000; }
.petals rect { mix-blend-mode: multiply; opacity: .9; }
.rule { width: 2px; height: 82px; background: #45434b; flex: none; }
.r1 { margin: -2px 8px 0 12px; }
.r2 { margin: -2px 8px 0 10px; }
.badge {
  position: absolute; left: 49px; top: -9px; width: 34px; height: 34px; border-radius: 50%;
  background: #e34c40; color: #fff; font-size: 20px; font-weight: 400;
  display: flex; align-items: center; justify-content: center;
}
```
